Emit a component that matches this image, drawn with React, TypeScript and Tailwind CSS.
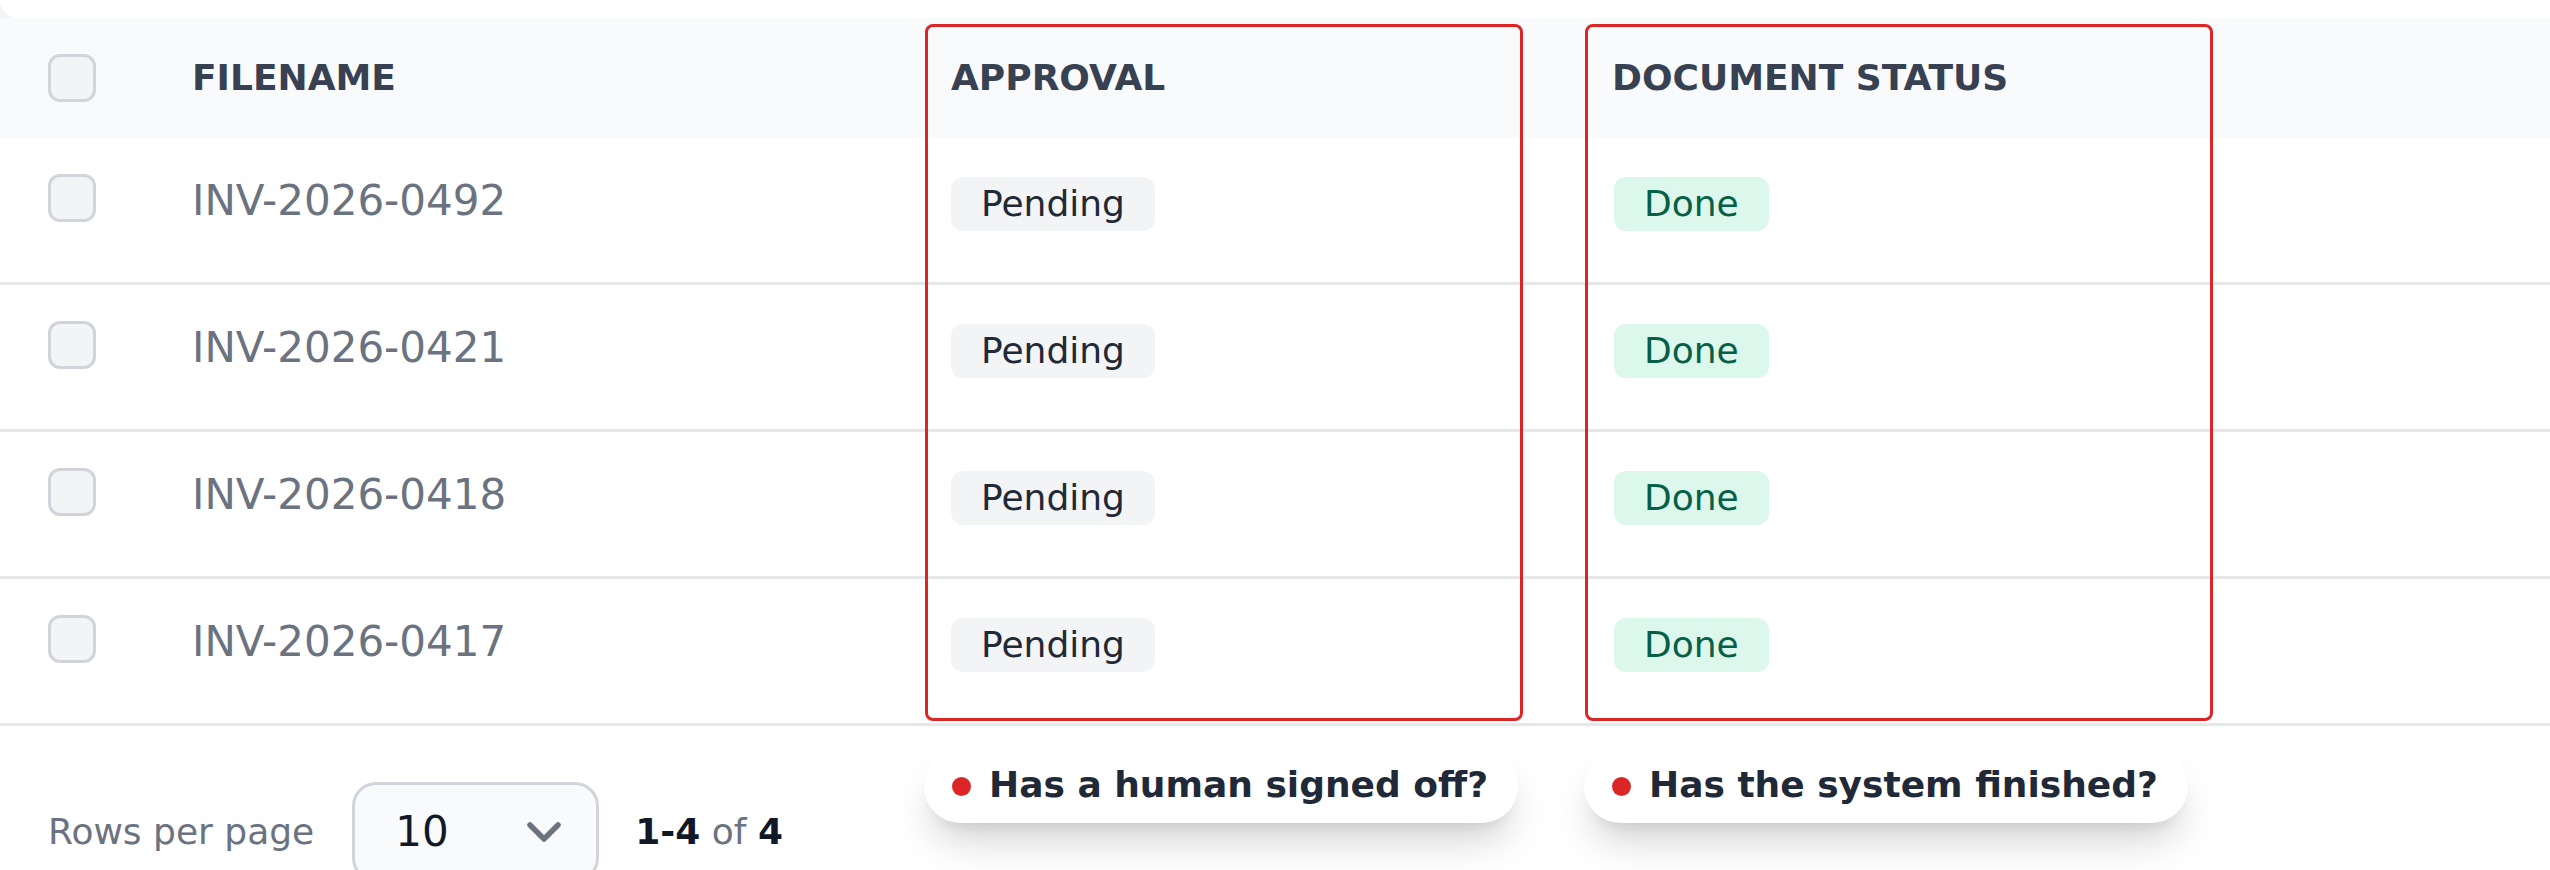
import React from "react";

function Checkbox({ className = "" }: { className?: string }) {
  return (
    <div
      className={
        "w-[48px] h-[48px] rounded-[12px] border-[3px] border-[#d1d5db] bg-[#f3f4f6] " +
        className
      }
    />
  );
}

const rows = ["INV-2026-0492", "INV-2026-0421", "INV-2026-0418", "INV-2026-0417"];

export default function App() {
  return (
    <div className="relative w-[2550px] h-[870px] overflow-hidden bg-white font-['DejaVu_Sans',sans-serif]">
      {/* top strip */}
      <div className="h-[18px] bg-[#f3f4f6]">
        <div className="h-full bg-white rounded-bl-[24px]" />
      </div>

      {/* header */}
      <div className="grid grid-cols-[145px_758px_664px_1fr] h-[120px] bg-[#f9fafb] items-center">
        <div className="pl-[48px] flex">
          <Checkbox />
        </div>
        <div className="pl-[47px] text-[36px] leading-[48px] font-bold text-[#374151]">FILENAME</div>
        <div className="pl-[48px] text-[36px] leading-[48px] font-bold text-[#374151]">APPROVAL</div>
        <div className="pl-[45px] text-[36px] leading-[48px] font-bold text-[#374151]">DOCUMENT STATUS</div>
      </div>

      {/* rows */}
      {rows.map((r) => (
        <div
          key={r}
          className="grid grid-cols-[145px_758px_664px_1fr] h-[147px] border-b-[3px] border-[#e5e7eb] items-center pb-[18px]"
        >
          <div className="pl-[48px] flex">
            <Checkbox className="mb-[6px]" />
          </div>
          <div className="pl-[47px] text-[42px] leading-[60px] text-[#6b7280]">{r}</div>
          <div className="pl-[48px] flex">
            <span className="mt-[6px] h-[54px] px-[30px] flex items-center rounded-[12px] bg-[#f3f4f6] text-[36px] leading-[48px] text-[#1f2937]">
              Pending
            </span>
          </div>
          <div className="pl-[47px] flex">
            <span className="mt-[6px] h-[54px] px-[30px] flex items-center rounded-[12px] bg-[#dcf7eb] text-[36px] leading-[48px] text-[#065f46]">
              Done
            </span>
          </div>
        </div>
      ))}

      {/* footer */}
      <div className="flex items-center pl-[48px] pt-[56px]">
        <span className="text-[36px] leading-[48px] text-[#6b7280]">Rows per page</span>
        <div className="ml-[38px] w-[247px] h-[100px] shrink-0 border-[3px] border-[#d1d5db] rounded-[24px] bg-[#f9fafb] flex items-center justify-between pl-[40px] pr-[34px]">
          <span className="text-[42px] leading-[60px] text-[#111827]">10</span>
          <svg width="36" height="22" viewBox="0 0 36 22" fill="none">
            <path d="M4 4 L18 18 L32 4" stroke="#6b7280" strokeWidth="5.5" strokeLinecap="round" strokeLinejoin="round" />
          </svg>
        </div>
        <span className="ml-[36px] text-[36px] leading-[48px] text-[#6b7280]">
          <b className="font-bold text-[#111827]">1-4</b> of <b className="font-bold text-[#111827]">4</b>
        </span>
      </div>

      {/* annotation boxes */}
      <div className="absolute left-[925px] top-[24px] w-[598px] h-[697px] border-[3px] border-[#dc2626] rounded-[8px]" />
      <div className="absolute left-[1585px] top-[24px] w-[628px] h-[697px] border-[3px] border-[#dc2626] rounded-[8px]" />

      {/* annotation pills */}
      <div className="absolute left-[924px] top-[750px] h-[73px] flex items-center gap-[18px] pl-[28px] pr-[30px] pb-[4px] rounded-full bg-white shadow-[0_24px_40px_-8px_rgba(0,0,0,0.18),0_10px_16px_-10px_rgba(0,0,0,0.12)]">
        <span className="w-[19px] h-[19px] mt-[4px] rounded-full bg-[#dc2626]" />
        <span className="text-[36px] leading-[48px] font-bold text-[#1f2937]">Has a human signed off?</span>
      </div>
      <div className="absolute left-[1584px] top-[750px] h-[73px] flex items-center gap-[18px] pl-[28px] pr-[30px] pb-[4px] rounded-full bg-white shadow-[0_24px_40px_-8px_rgba(0,0,0,0.18),0_10px_16px_-10px_rgba(0,0,0,0.12)]">
        <span className="w-[19px] h-[19px] mt-[4px] rounded-full bg-[#dc2626]" />
        <span className="text-[36px] leading-[48px] font-bold text-[#1f2937]">Has the system finished?</span>
      </div>
    </div>
  );
}
